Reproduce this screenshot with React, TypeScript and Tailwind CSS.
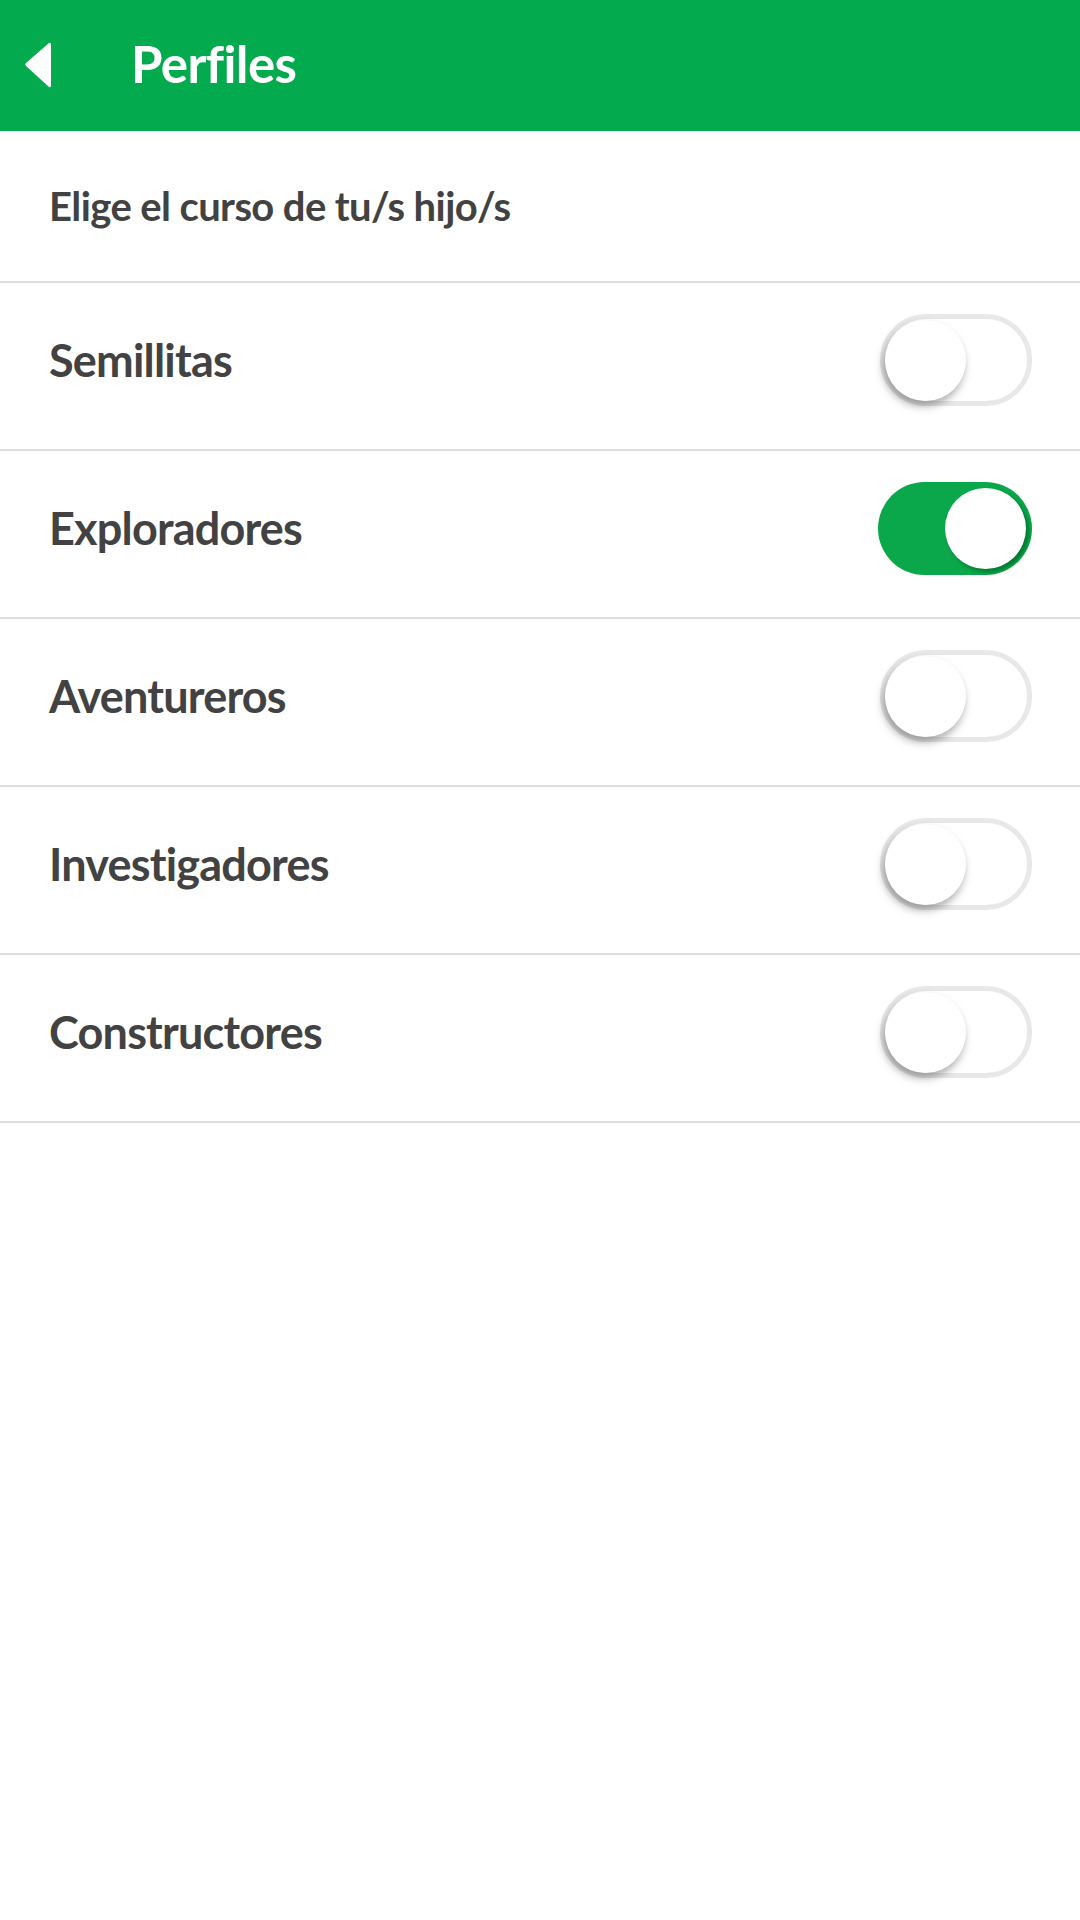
import React from "react";

const items = [
  { label: "Semillitas", on: false },
  { label: "Exploradores", on: true },
  { label: "Aventureros", on: false },
  { label: "Investigadores", on: false },
  { label: "Constructores", on: false },
];

function Toggle({ on }: { on: boolean }) {
  return on ? (
    <div className="relative w-[154px] h-[93px] rounded-full bg-[#0aa84a]">
      <div className="absolute right-[6px] top-[6px] w-[81px] h-[81px] rounded-full bg-white shadow-[3px_3px_4px_rgba(0,60,20,0.45)]" />
    </div>
  ) : (
    <div className="relative w-[152px] h-[92px] rounded-full bg-white border-[5px] border-[#e8e8e8]">
      <div className="absolute left-0 top-[1px] w-[81px] h-[81px] rounded-full bg-white shadow-[-2px_5px_8px_rgba(0,0,0,0.35)]" />
    </div>
  );
}

export default function App() {
  return (
    <div className="w-[1080px] h-[1920px] bg-white" style={{ fontFamily: "Lato, 'Noto Sans', sans-serif" }}>
      <div className="h-[131px] bg-[#03ab4e] flex items-center">
        <div className="w-[131px] flex pl-[23px] pb-[2px]">
          <svg width="30" height="48" viewBox="0 0 30 48">
            <path d="M26 2 Q28 1 28 4 L28 44 Q28 47 26 46 L3 25 Q1.5 23 3 22 Z" fill="white" />
          </svg>
        </div>
        <div className="text-white font-bold text-[51px] tracking-[-0.6px] leading-none pb-[4px]">Perfiles</div>
      </div>
      <div className="h-[152px] flex items-center pl-[49px] border-b-2 border-[#dedede]">
        <div className="text-[#424242] font-bold text-[40px] tracking-[-0.6px] leading-none">Elige el curso de tu/s hijo/s</div>
      </div>
      {items.map((it) => (
        <div key={it.label} className="h-[168px] flex items-center justify-between pl-[49px] pr-[48px] pb-[12px] border-b-2 border-[#dedede]">
          <div className="text-[#424242] font-bold text-[45px] tracking-[-0.8px] leading-none">{it.label}</div>
          <Toggle on={it.on} />
        </div>
      ))}
    </div>
  );
}
